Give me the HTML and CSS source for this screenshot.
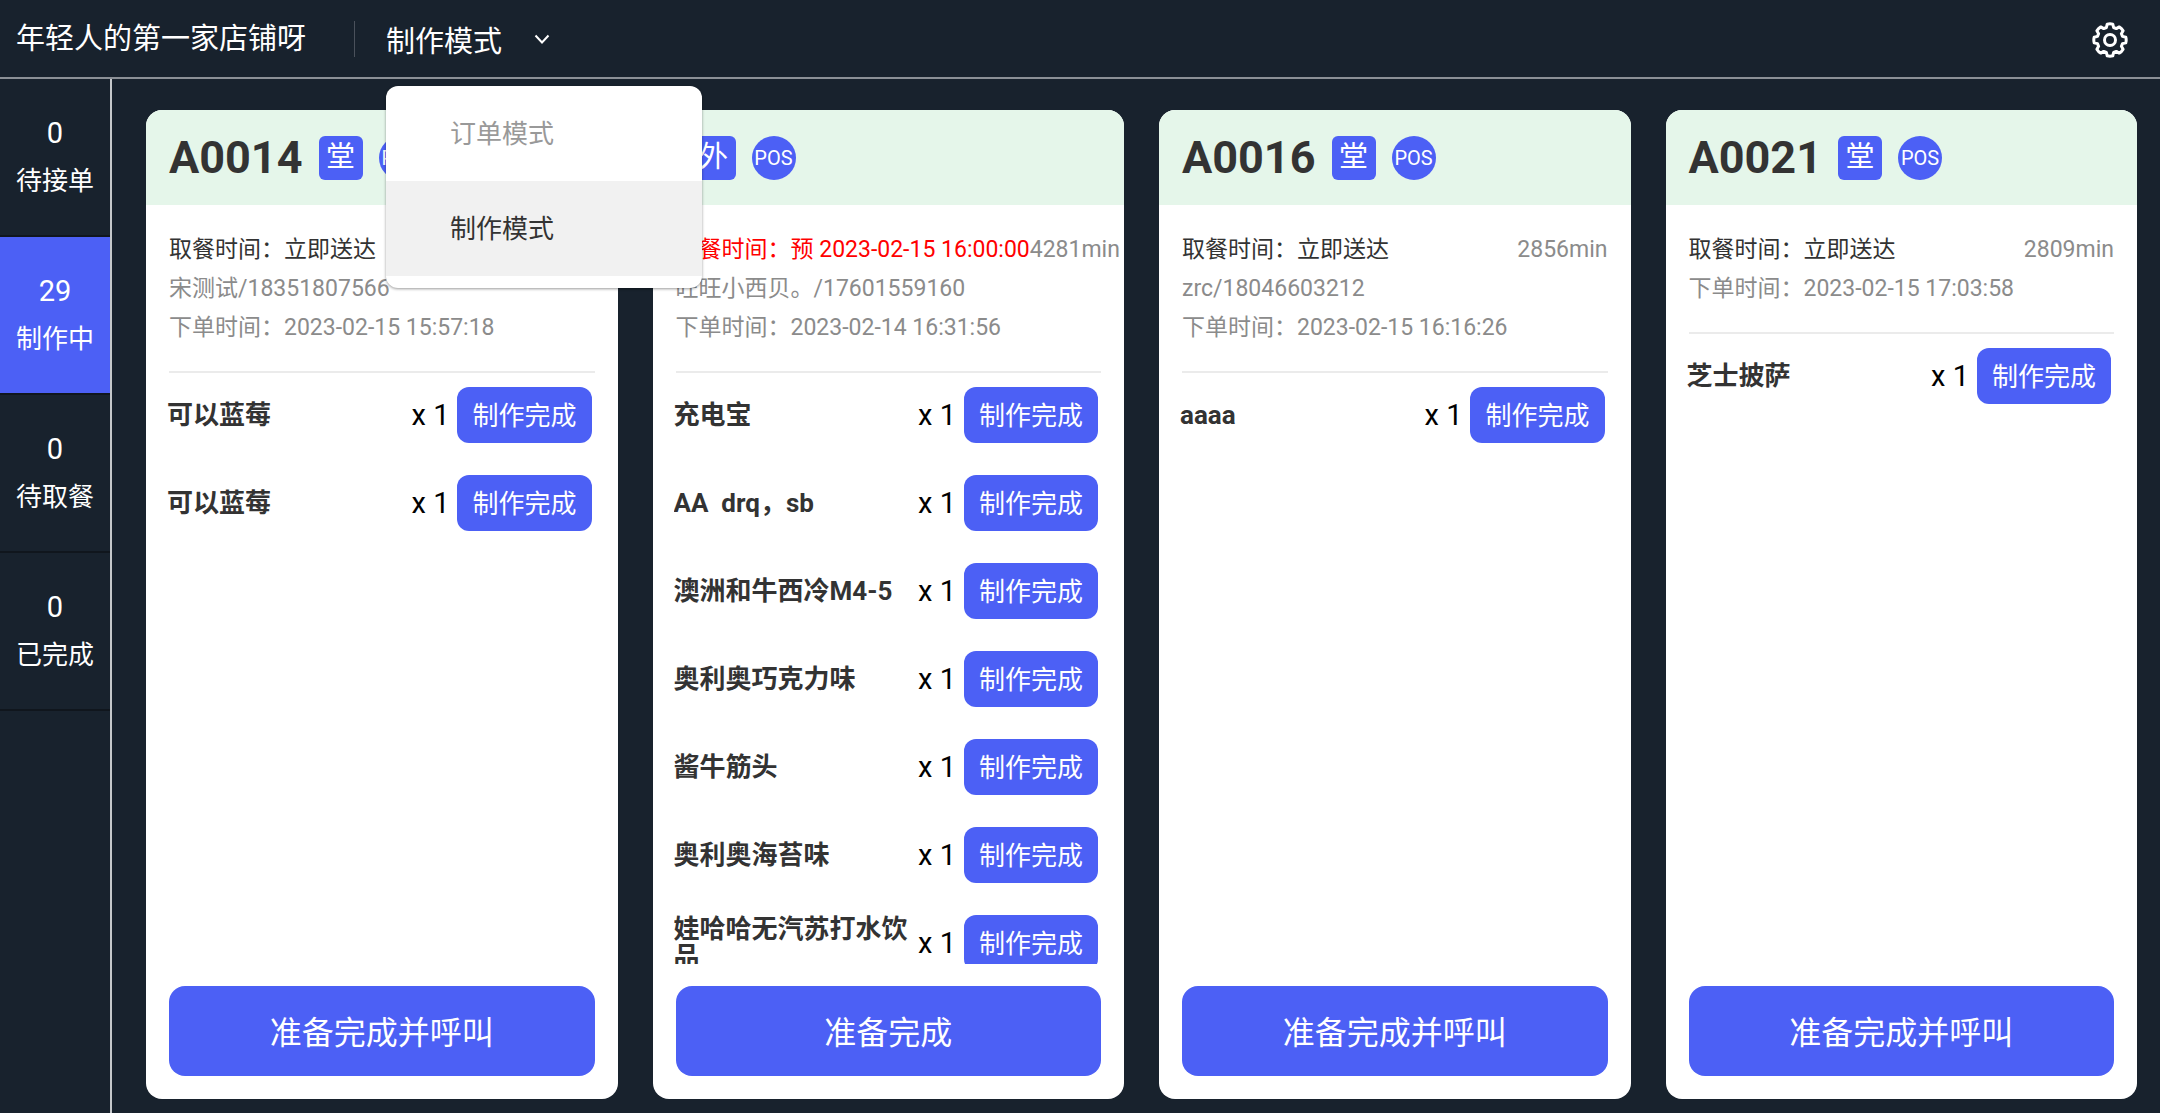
FILE: index.html
```html
<!DOCTYPE html>
<html lang="zh-CN">
<head>
    <meta charset="UTF-8">
    <meta name="viewport" content="width=device-width, initial-scale=1.0">
    <title>制作模式</title>
    <link rel="stylesheet" href="styles.css">
</head>
<body>
    <header class="topbar">
        <h1 class="shop-name">年轻人的第一家店铺呀</h1>
        <div class="mode">
            <button type="button" class="mode-toggle" aria-haspopup="menu" aria-expanded="true">
                制作模式
                <svg class="chevron" viewBox="0 0 16 10"><path d="M1.5 1.5L8 8.5L14.5 1.5"/></svg>
            </button>
            <div class="mode-menu" role="menu">
                <button type="button" class="mode-option" role="menuitem">订单模式</button>
                <button type="button" class="mode-option selected" role="menuitem">制作模式</button>
            </div>
        </div>
        <button type="button" class="settings" aria-label="设置">
            <svg viewBox="0 0 36 36">
                <path d="M15.2 2.2Q18 1.4 20.8 2.2L21.6 5.5L24.3 6.6L27.2 4.9Q29.7 6.3 31.1 8.8L29.4 11.7L30.5 14.4L33.8 15.2Q34.6 18 33.8 20.8L30.5 21.6L29.4 24.3L31.1 27.2Q29.7 29.7 27.2 31.1L24.3 29.4L21.6 30.5L20.8 33.8Q18 34.6 15.2 33.8L14.4 30.5L11.7 29.4L8.8 31.1Q6.3 29.7 4.9 27.2L6.6 24.3L5.5 21.6L2.2 20.8Q1.4 18 2.2 15.2L5.5 14.4L6.6 11.7L4.9 8.8Q6.3 6.3 8.8 4.9L11.7 6.6L14.4 5.5Z"/>
                <circle cx="18" cy="18" r="5.5"/>
            </svg>
        </button>
    </header>

    <div class="layout">
        <nav class="sidebar">
            <a href="#pending" class="status"><span class="count">0</span>待接单</a>
            <a href="#making" class="status active"><span class="count">29</span>制作中</a>
            <a href="#pickup" class="status"><span class="count">0</span>待取餐</a>
            <a href="#done" class="status"><span class="count">0</span>已完成</a>
        </nav>

        <main class="orders">
            <section class="card">
                <div class="card-header">
                    <h2>A0014</h2>
                    <span class="tag">堂</span>
                    <span class="tag tag-pos">POS</span>
                </div>
                <div class="info">
                    <p class="pickup">取餐时间：立即送达</p>
                    <p>宋测试/18351807566</p>
                    <p>下单时间：2023-02-15 15:57:18</p>
                </div>
                <ul class="items">
                    <li><span class="name">可以蓝莓</span><span class="qty">x 1</span><button type="button" class="btn">制作完成</button></li>
                    <li><span class="name">可以蓝莓</span><span class="qty">x 1</span><button type="button" class="btn">制作完成</button></li>
                </ul>
                <button type="button" class="btn btn-large">准备完成并呼叫</button>
            </section>

            <section class="card">
                <div class="card-header">
                    <span class="tag">外</span>
                    <span class="tag tag-pos">POS</span>
                </div>
                <div class="info">
                    <p class="pickup reserved"><span>取餐时间：预 2023-02-15 16:00:00</span><span class="elapsed">4281min</span></p>
                    <p>旺旺小西贝。/17601559160</p>
                    <p>下单时间：2023-02-14 16:31:56</p>
                </div>
                <ul class="items">
                    <li><span class="name">充电宝</span><span class="qty">x 1</span><button type="button" class="btn">制作完成</button></li>
                    <li><span class="name">AA  drq，sb</span><span class="qty">x 1</span><button type="button" class="btn">制作完成</button></li>
                    <li><span class="name">澳洲和牛西冷M4-5</span><span class="qty">x 1</span><button type="button" class="btn">制作完成</button></li>
                    <li><span class="name">奥利奥巧克力味</span><span class="qty">x 1</span><button type="button" class="btn">制作完成</button></li>
                    <li><span class="name">酱牛筋头</span><span class="qty">x 1</span><button type="button" class="btn">制作完成</button></li>
                    <li><span class="name">奥利奥海苔味</span><span class="qty">x 1</span><button type="button" class="btn">制作完成</button></li>
                    <li><span class="name">娃哈哈无汽苏打水饮品</span><span class="qty">x 1</span><button type="button" class="btn">制作完成</button></li>
                </ul>
                <button type="button" class="btn btn-large">准备完成</button>
            </section>

            <section class="card">
                <div class="card-header">
                    <h2>A0016</h2>
                    <span class="tag">堂</span>
                    <span class="tag tag-pos">POS</span>
                </div>
                <div class="info">
                    <p class="pickup"><span>取餐时间：立即送达</span><span class="elapsed">2856min</span></p>
                    <p>zrc/18046603212</p>
                    <p>下单时间：2023-02-15 16:16:26</p>
                </div>
                <ul class="items">
                    <li><span class="name">aaaa</span><span class="qty">x 1</span><button type="button" class="btn">制作完成</button></li>
                </ul>
                <button type="button" class="btn btn-large">准备完成并呼叫</button>
            </section>

            <section class="card">
                <div class="card-header">
                    <h2>A0021</h2>
                    <span class="tag">堂</span>
                    <span class="tag tag-pos">POS</span>
                </div>
                <div class="info">
                    <p class="pickup"><span>取餐时间：立即送达</span><span class="elapsed">2809min</span></p>
                    <p>下单时间：2023-02-15 17:03:58</p>
                </div>
                <ul class="items">
                    <li><span class="name">芝士披萨</span><span class="qty">x 1</span><button type="button" class="btn">制作完成</button></li>
                </ul>
                <button type="button" class="btn btn-large">准备完成并呼叫</button>
            </section>
        </main>
    </div>
</body>
</html>
```
FILE: styles.css
```css
* {
    margin: 0;
    padding: 0;
    box-sizing: border-box;
}

body {
    font-family: Roboto, 'Noto Sans CJK SC', sans-serif;
    background: #18222d;
    color: #333;
    height: 100vh;
    display: flex;
    flex-direction: column;
    overflow: hidden;
}

button {
    font: inherit;
    border: none;
    background: none;
    cursor: pointer;
}

/* top bar */
.topbar {
    display: flex;
    align-items: center;
    height: 79px;
    padding: 0 32px 0 16px;
    border-bottom: 2px solid #8b9096;
    color: #fff;
    flex-shrink: 0;
}

.shop-name {
    font-size: 29px;
    font-weight: 400;
    line-height: 36px;
}

.mode {
    position: relative;
    margin-left: 48px;
    border-left: 1px solid #4a515b;
}

.mode-toggle {
    display: flex;
    align-items: center;
    gap: 32px;
    padding-left: 31px;
    height: 36px;
    font-size: 29px;
    color: #fff;
}

.chevron {
    width: 16px;
    height: 10px;
    fill: none;
    stroke: #fff;
    stroke-width: 2;
}

.mode-menu {
    position: absolute;
    top: 65px;
    left: 31px;
    z-index: 10;
    width: 316px;
    padding-bottom: 12px;
    background: #fff;
    border-radius: 12px;
    box-shadow: 0 1px 3px rgba(0, 0, 0, 0.4);
    overflow: hidden;
}

.mode-option {
    display: block;
    width: 100%;
    height: 95px;
    padding: 0 0 4px 64px;
    font-size: 26px;
    text-align: left;
    color: #999;
}

.mode-option.selected {
    background: #f1f1f1;
    color: #333;
}

.settings {
    width: 36px;
    height: 36px;
    margin-top: 2px;
    margin-left: auto;
}

.settings svg {
    display: block;
    fill: none;
    stroke: #fff;
    stroke-width: 3;
    stroke-linejoin: round;
}

.layout {
    display: flex;
    flex: 1;
    min-height: 0;
}

/* order status */
.sidebar {
    width: 112px;
    border-right: 2px solid #c5c8cb;
    flex-shrink: 0;
}

.status {
    display: flex;
    flex-direction: column;
    align-items: center;
    justify-content: center;
    height: 158px;
    border-bottom: 2px solid #10161d;
    font-size: 26px;
    line-height: 48px;
    color: #fff;
    text-decoration: none;
}

.status.active {
    background: #4c60f5;
}

.count {
    font-size: 29px;
}

/* order cards */
.orders {
    flex: 1;
    min-width: 0;
    display: grid;
    grid-template-columns: repeat(4, minmax(0, 1fr));
    grid-template-rows: minmax(0, 1fr);
    gap: 35px;
    padding: 31px 23px 14px 34px;
}

.card {
    display: flex;
    flex-direction: column;
    padding-bottom: 23px;
    background: #fff;
    border-radius: 16px;
    overflow: hidden;
}

.card-header {
    display: flex;
    align-items: center;
    height: 95px;
    padding: 0 23px;
    background: #e5f6ea;
    flex-shrink: 0;
}

.card-header h2 {
    font-size: 45px;
    font-weight: 700;
}

.tag {
    width: 44px;
    height: 44px;
    margin-left: 16px;
    border-radius: 6px;
    background: #4c60f5;
    color: #fff;
    font-size: 29px;
    line-height: 42px;
    text-align: center;
}

.tag-pos {
    border-radius: 50%;
    font-size: 20px;
    line-height: 44px;
}

.info {
    margin: 0 23px;
    padding: 25px 0 24px;
    border-bottom: 2px solid #ebebeb;
    font-size: 23px;
    line-height: 39px;
    color: #8b8b8b;
    white-space: nowrap;
}

.pickup {
    display: flex;
    justify-content: space-between;
    color: #333;
}

.pickup.reserved {
    color: #f00;
}

.pickup .elapsed {
    color: #8b8b8b;
}

.items {
    flex: 1;
    min-height: 0;
    margin: 0 26px 22px 21px;
    overflow: hidden;
    list-style: none;
}

.items li {
    display: flex;
    align-items: center;
    height: 88px;
    padding-bottom: 4px;
}

.name {
    flex: 1;
    font-size: 26px;
    font-weight: 700;
    line-height: 28px;
    white-space: pre-wrap;
}

.qty {
    margin-right: 8px;
    font-size: 29px;
    color: #000;
}

.btn {
    height: 56px;
    padding: 0 15px 3px;
    border-radius: 12px;
    background: #4c60f5;
    color: #fff;
    font-size: 26px;
}

.btn-large {
    height: 90px;
    margin: 0 23px;
    border-radius: 16px;
    font-size: 32px;
    flex-shrink: 0;
}
```
